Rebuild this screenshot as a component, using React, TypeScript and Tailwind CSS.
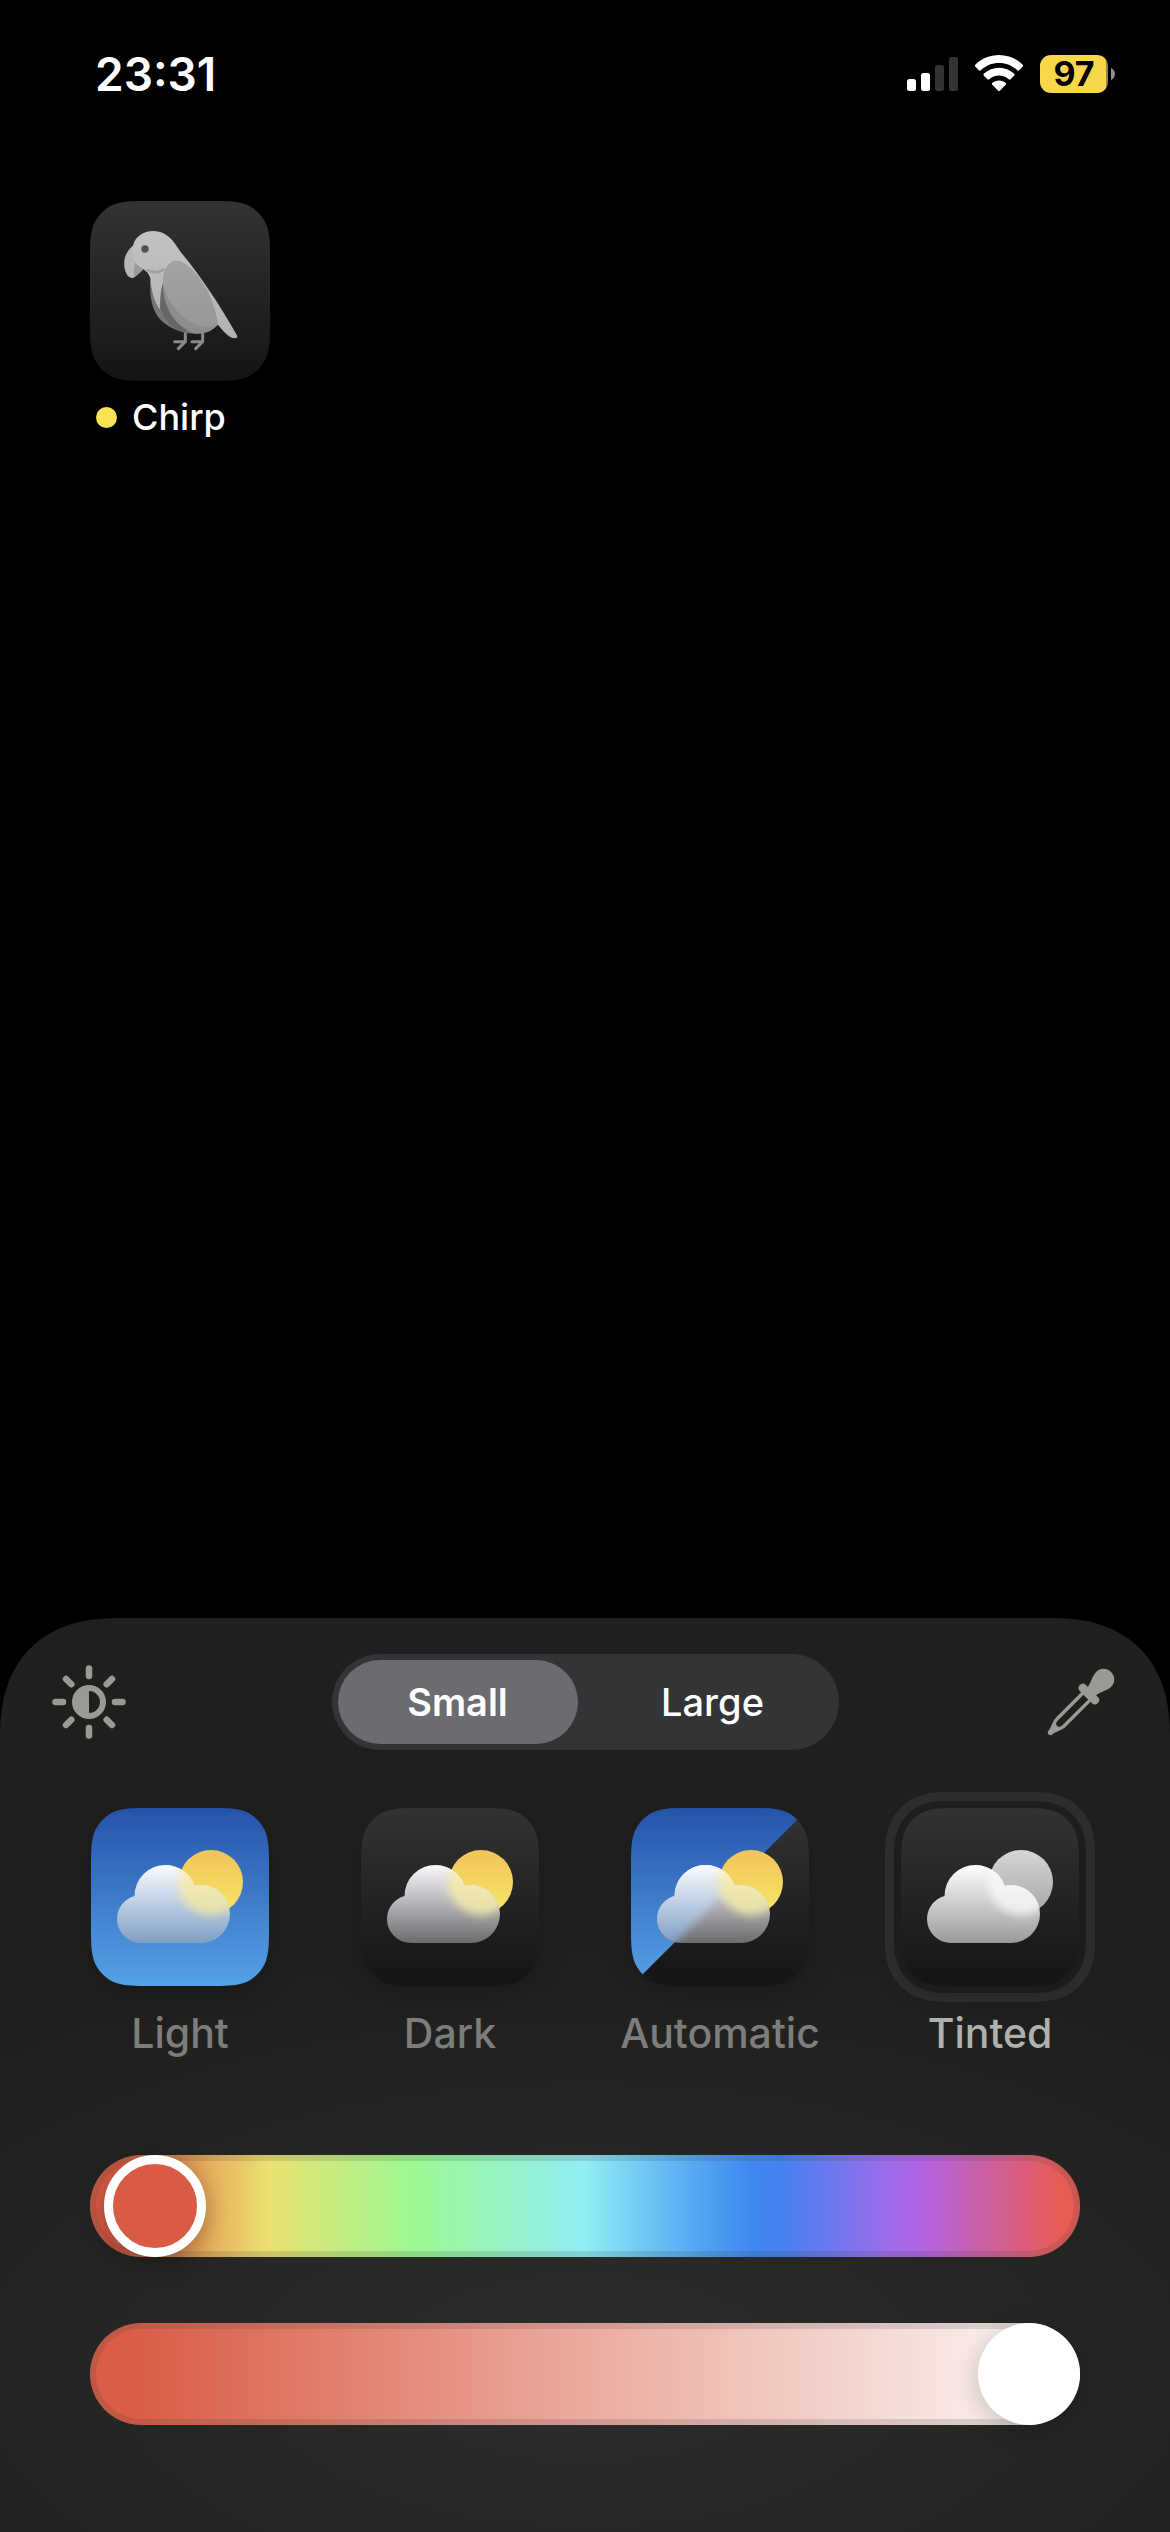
import { useId, useState } from "react";
import type { ReactNode } from "react";

/** Outline of a continuous-corner square, as used for home screen icons. */
function squircle(s: number, r: number): string {
  const a = 1.5287 * r;
  const b = 1.0885 * r;
  const c = 0.8684 * r;
  const d = 0.6315 * r;
  const e = 0.0749 * r;
  const f = 0.3728 * r;
  const g = 0.1691 * r;
  return [
    `M${a} 0L${s - a} 0`,
    `C${s - b} 0 ${s - c} 0 ${s - d} ${e}C${s - f} ${g} ${s - g} ${f} ${s - e} ${d}C${s} ${c} ${s} ${b} ${s} ${a}`,
    `L${s} ${s - a}`,
    `C${s} ${s - b} ${s} ${s - c} ${s - e} ${s - d}C${s - g} ${s - f} ${s - f} ${s - g} ${s - d} ${s - e}C${s - c} ${s} ${s - b} ${s} ${s - a} ${s}`,
    `L${a} ${s}`,
    `C${b} ${s} ${c} ${s} ${d} ${s - e}C${f} ${s - g} ${g} ${s - f} ${e} ${s - d}C0 ${s - c} 0 ${s - b} 0 ${s - a}`,
    `L0 ${a}`,
    `C0 ${b} 0 ${c} ${e} ${d}C${g} ${f} ${f} ${g} ${d} ${e}C${c} 0 ${b} 0 ${a} 0Z`,
  ].join("");
}

function VGradient({ id, from, to, y1 = 0, y2 }: { id: string; from: string; to: string; y1?: number; y2: number }) {
  return (
    <linearGradient id={id} gradientUnits="userSpaceOnUse" x1="0" x2="0" y1={y1} y2={y2}>
      <stop offset="0" stopColor={from} />
      <stop offset="1" stopColor={to} />
    </linearGradient>
  );
}

function StatusBar() {
  return (
    <header className="flex h-[148px] items-center justify-between pl-[95px] pr-[55px]">
      <time className="text-[46px] leading-[56px] font-semibold">23:31</time>
      <div className="flex items-center">
        <svg className="h-[38px] w-[51px]" viewBox="0 0 51 38" role="img" aria-label="Signal">
          <rect x="0" y="24" width="9" height="12" rx="2.5" fill="#fff" />
          <rect x="14" y="18" width="9" height="18" rx="2.5" fill="#fff" />
          <rect x="28" y="10" width="9" height="26" rx="2.5" fill="#333" />
          <rect x="42" y="2" width="9" height="34" rx="2.5" fill="#333" />
        </svg>
        <svg className="ml-[17px] h-[38px] w-[48px]" viewBox="0 0 48 38" role="img" aria-label="Wi-Fi" fill="#fff">
          <path d="M24 0C33 0 41.5 3.500 47.500 9.500C48.200 10.200 48.200 11 47.600 11.700L44.200 15.200C43.600 15.800 42.800 15.800 42.200 15.200C37.300 10.600 31 8 24 8C17 8 10.700 10.600 5.800 15.200C5.200 15.800 4.400 15.800 3.800 15.200L0.400 11.700C-0.200 11-0.200 10.200 0.500 9.500C6.500 3.500 15 0 24 0Z" />
          <path d="M24 12.700C29.800 12.700 35 14.900 39 18.600C39.700 19.300 39.700 20.100 39.100 20.700L35.600 24.200C35 24.800 34.300 24.800 33.600 24.200C31 21.900 27.700 20.600 24 20.600C20.300 20.600 17 21.900 14.400 24.200C13.700 24.800 13 24.800 12.400 24.200L8.900 20.700C8.300 20.100 8.300 19.300 9 18.600C13 14.900 18.200 12.700 24 12.700Z" />
          <path d="M24 25.400C26.600 25.400 28.800 26.300 30.600 27.800C31.300 28.400 31.300 29.200 30.700 29.800L25.100 35.500C24.400 36.200 23.600 36.200 22.900 35.500L17.300 29.800C16.700 29.200 16.700 28.400 17.400 27.800C19.200 26.300 21.400 25.400 24 25.400Z" />
        </svg>
        <div className="ml-[17px] flex items-center gap-[3px]">
          <div className="flex h-[38px] w-[68px] items-center justify-center rounded-[11px] bg-linear-to-r from-[#f9d74a] from-97% to-[#8a8465] to-97% text-[34px] leading-none font-bold text-black">
            97
          </div>
          <svg className="h-[12px] w-[4px]" viewBox="0 0 4 12" aria-hidden="true">
            <path d="M0 0C2.500 1 4 3.500 4 6S2.500 11 0 12Z" fill="#8e8e8e" />
          </svg>
        </div>
      </div>
    </header>
  );
}

function ParrotIcon() {
  return (
    <svg className="size-[180px]" viewBox="0 0 180 180" aria-hidden="true">
      <defs>
        <VGradient id="parrot-bg" from="#333333" to="#141414" y2={180} />
        <VGradient id="parrot-body" from="#c3c3c3" to="#b0b0b0" y1={123} y2={446} />
        <VGradient id="parrot-wing" from="#a3a3a3" to="#979797" y1={212} y2={420} />
      </defs>
      <path d={squircle(180, 40)} fill="url(#parrot-bg)" />
      <g transform="scale(0.33333) translate(-30 -33)">
        <g fill="none" stroke="#8a8a8a" strokeWidth="9" strokeLinecap="round" strokeLinejoin="round">
          <path d="M316 420V455L295 476M316 455H284" />
          <path d="M368 420V455L347 476M368 455H336" />
        </g>
        <path d="M162 164C140 180 130 205 133 230C136 252 145 264 160 264C170 256 182 248 189 238Z" fill="#b7b7b7" />
        <path d="M165 218L190 238C180 247 172 254 162 262C161 246 161 232 165 218Z" fill="#9a9a9a" />
        <path d="M160 165C165 140 190 123 220 123C258 123 280 150 302 186C360 255 420 345 472 438C474 446 462 446 452 442C435 432 425 418 413 403L300 330L250 290L240 360C222 340 212 310 211 265C208 252 200 243 188 236C163 222 153 195 160 165Z" fill="url(#parrot-body)" />
        <path d="M211 262C207 340 222 380 262 406C290 425 325 432 350 431L300 350L249 280C242 305 242 335 240 360C224 338 214 305 211 262Z" fill="#777777" />
        <path d="M249 280C240 310 238 345 246 366C258 400 285 420 315 428L330 400L262 300Z" fill="#666666" />
        <path d="M249 275C250 240 268 212 288 212C320 215 350 250 375 290C396 325 408 370 414 404C395 424 375 432 345 431C285 410 246 350 249 275Z" fill="#8d8d8d" />
        <path d="M249 280C250 240 268 212 288 212C320 215 350 250 375 290C396 325 408 370 414 404C402 410 385 412 370 411C310 395 262 345 249 280Z" fill="url(#parrot-wing)" />
        <path d="M203 241C220 248 238 248 252 238" fill="none" stroke="#a0a0a0" strokeWidth="8" strokeLinecap="round" />
        <circle cx="195" cy="177" r="11" fill="#505050" />
      </g>
    </svg>
  );
}

type Tone = "light" | "dark" | "automatic" | "tinted";

function CloudShape() {
  return (
    <>
      <circle cx="74.500" cy="88" r="31" />
      <circle cx="110" cy="106" r="29" />
      <circle cx="50" cy="111" r="24" />
      <rect x="50" y="90" width="60" height="45" />
    </>
  );
}

function WeatherIcon({ tone }: { tone: Tone }) {
  const id = useId();
  const ref = (name: string) => `url(#${id}${name})`;
  const gray = tone === "tinted";
  return (
    <svg className="size-[178px] drop-shadow-[0_8px_12px_rgba(0,0,0,0.2)]" viewBox="0 0 178 178" aria-hidden="true">
      <defs>
        <VGradient id={`${id}day`} from="#2653aa" to="#55a2e6" y2={178} />
        <VGradient id={`${id}night`} from="#333333" to="#141414" y2={178} />
        <VGradient id={`${id}sun`} from={gray ? "#d6d6d6" : "#f1c459"} to={gray ? "#a8a8a8" : "#f7e569"} y1={42} y2={104} />
        <VGradient id={`${id}dayCloud`} from="#fbfbff" to="#7f9fc4" y1={57} y2={135} />
        <VGradient id={`${id}nightCloud`} from={gray ? "#ffffff" : "#faf8ff"} to={gray ? "#9a9a9a" : "#6c6c6e"} y1={57} y2={135} />
        <VGradient id={`${id}glow`} from={gray ? "#f8f8f8" : "#fbf0bb"} to={gray ? "#f0f0f0" : "#e8e2a6"} y1={57} y2={106} />
        <clipPath id={`${id}tile`}>
          <path d={squircle(178, 40)} />
        </clipPath>
        <clipPath id={`${id}cloud`}>
          <CloudShape />
        </clipPath>
        <filter id={`${id}soft`} x="-30%" y="-30%" width="160%" height="160%">
          <feGaussianBlur stdDeviation="4" />
        </filter>
      </defs>
      <g clipPath={ref("tile")}>
        <rect width="178" height="178" fill={tone === "light" ? ref("day") : ref("night")} />
        {tone === "automatic" && <path d="M0 0H178L0 178Z" fill={ref("day")} />}
      </g>
      <circle cx="120" cy="74" r="32" fill={ref("sun")} />
      <g clipPath={ref("cloud")}>
        <rect x="20" y="50" width="125" height="90" fill={tone === "light" ? ref("dayCloud") : ref("nightCloud")} />
        {tone === "automatic" && <path d="M-20 0H178L0 178H-20Z" fill={ref("dayCloud")} filter={ref("soft")} />}
        <circle cx="120" cy="74" r="33" fill={ref("glow")} opacity="0.95" filter={ref("soft")} />
      </g>
    </svg>
  );
}

function BrightnessIcon() {
  return (
    <svg className="size-[74px]" viewBox="0 0 74 74" aria-hidden="true">
      <g stroke="#999996" strokeWidth="6.500" strokeLinecap="round">
        {[0, 45, 90, 135, 180, 225, 270, 315].map((angle) => (
          <path key={angle} d={angle % 90 === 0 ? "M37 3.500V11" : "M37 4.500V12"} transform={`rotate(${angle} 37 37)`} />
        ))}
      </g>
      <circle cx="37" cy="37" r="14" fill="none" stroke="#999996" strokeWidth="6" />
      <path d="M37 22A15 15 0 0 0 37 52Z" fill="#999996" />
    </svg>
  );
}

function EyedropperIcon() {
  return (
    <svg className="size-[74px]" viewBox="0 0 74 74" aria-hidden="true">
      <g transform="translate(37 37) rotate(45)" fill="#999996">
        <path d="M0 -42.500C6 -42.500 10.600 -38 10.600 -32C10.600 -26 7 -22 6 -15.500H9C14 -15.500 14 -7 9 -7H-9C-14 -7 -14 -15.500 -9 -15.500H-6C-7 -22 -10.600 -26 -10.600 -32C-10.600 -38 -6 -42.500 0 -42.500Z" />
        <path fillRule="evenodd" d="M-6.700 -8H6.700V28C6.700 34 3.200 38 2.500 44C2 46.500 -2 46.500 -2.500 44C-3.200 38 -6.700 34 -6.700 28ZM-3.300 -7V30C-3.300 35 3.300 35 3.300 30V-7Z" />
      </g>
    </svg>
  );
}

function Segment({ active, onClick, children }: { active: boolean; onClick: () => void; children: ReactNode }) {
  return (
    <button
      type="button"
      aria-pressed={active}
      onClick={onClick}
      className={
        active
          ? "h-[84px] w-[240px] rounded-full bg-[#6b6c70] text-[38px] font-semibold"
          : "h-[84px] w-[240px] rounded-full text-[38px] font-medium"
      }
    >
      {children}
    </button>
  );
}

const tones: { tone: Tone; label: string }[] = [
  { tone: "light", label: "Light" },
  { tone: "dark", label: "Dark" },
  { tone: "automatic", label: "Automatic" },
  { tone: "tinted", label: "Tinted" },
];

export default function App() {
  const [size, setSize] = useState("small");
  const [selected, setSelected] = useState<Tone>("tinted");

  return (
    <div className="flex min-h-screen flex-col bg-black font-['Inter',sans-serif] text-white">
      <StatusBar />

      <main className="px-[90px] pt-[53px]">
        <a href="#chirp" className="flex w-[180px] flex-col">
          <ParrotIcon />
          <span className="mt-[14px] flex items-center gap-[15px] pl-[6px] text-[36px] leading-[44px] font-medium">
            <span className="size-[21px] rounded-full bg-[#fce353]" />
            Chirp
          </span>
        </a>
      </main>

      <section
        aria-label="Icon appearance"
        className="mt-auto rounded-t-[120px] bg-[#1f201e] bg-radial-[ellipse_75%_45%_at_50%_82%] from-[#2c2d2b] to-[#1f201e] pt-[36px] pb-[107px] [corner-shape:superellipse(1.25)]"
      >
        <div className="flex items-center justify-between px-[52px]">
          <button type="button" aria-label="Dim wallpaper">
            <BrightnessIcon />
          </button>
          <div className="flex gap-[15px] rounded-full bg-[#333436] p-[6px]">
            <Segment active={size === "small"} onClick={() => setSize("small")}>
              Small
            </Segment>
            <Segment active={size === "large"} onClick={() => setSize("large")}>
              Large
            </Segment>
          </div>
          <button type="button" aria-label="Pick a color">
            <EyedropperIcon />
          </button>
        </div>

        <div className="mt-[42px] grid grid-cols-4 px-[45px]">
          {tones.map(({ tone, label }) => (
            <button
              key={tone}
              type="button"
              aria-pressed={selected === tone}
              onClick={() => setSelected(tone)}
              className="group flex flex-col items-center text-[#7d7d7b] aria-pressed:text-[#b0b0ae]"
            >
              <span className="flex size-[210px] items-center justify-center rounded-[60px] border-[9px] border-transparent [corner-shape:superellipse(1.2)] group-aria-pressed:border-[#2e2f2d]">
                <WeatherIcon tone={tone} />
              </span>
              <span className="mt-[7px] text-[41px] leading-[48px] font-medium">{label}</span>
            </button>
          ))}
        </div>

        <div className="mt-[98px] flex flex-col gap-[66px] px-[90px]">
          <input
            type="range"
            aria-label="Hue"
            min={0}
            max={1000}
            defaultValue={16}
            className="h-[102px] w-full appearance-none rounded-full bg-[linear-gradient(90deg,#d95b45_3%,#e6ae5c_12%,#ebe170_18%,#9bf893_33%,#91edf3_50%,#55a8f2_61%,#3f88ee_67%,#4581ef_70%,#a06cec_81%,#b264e4_84%,#e95c54_98%)] shadow-[inset_0_0_0_6px_rgba(60,60,60,0.16)] [&::-webkit-slider-thumb]:size-[102px] [&::-webkit-slider-thumb]:appearance-none [&::-webkit-slider-thumb]:rounded-full [&::-webkit-slider-thumb]:border-[9px] [&::-webkit-slider-thumb]:border-white [&::-webkit-slider-thumb]:bg-[#d95b45] [&::-webkit-slider-thumb]:shadow-[0_6px_24px_rgba(0,0,0,0.3)]"
          />
          <input
            type="range"
            aria-label="Saturation"
            min={0}
            max={1000}
            defaultValue={1000}
            className="h-[102px] w-full appearance-none rounded-full bg-[linear-gradient(90deg,#d95d47_4%,#e07c6b_23%,#ecaca2_51%,#f1ccc5_71%,#f9eeeb_92%)] shadow-[inset_0_0_0_6px_rgba(60,60,60,0.16)] [&::-webkit-slider-thumb]:size-[102px] [&::-webkit-slider-thumb]:appearance-none [&::-webkit-slider-thumb]:rounded-full [&::-webkit-slider-thumb]:bg-white [&::-webkit-slider-thumb]:shadow-[0_6px_24px_rgba(0,0,0,0.2)]"
          />
        </div>
      </section>
    </div>
  );
}
